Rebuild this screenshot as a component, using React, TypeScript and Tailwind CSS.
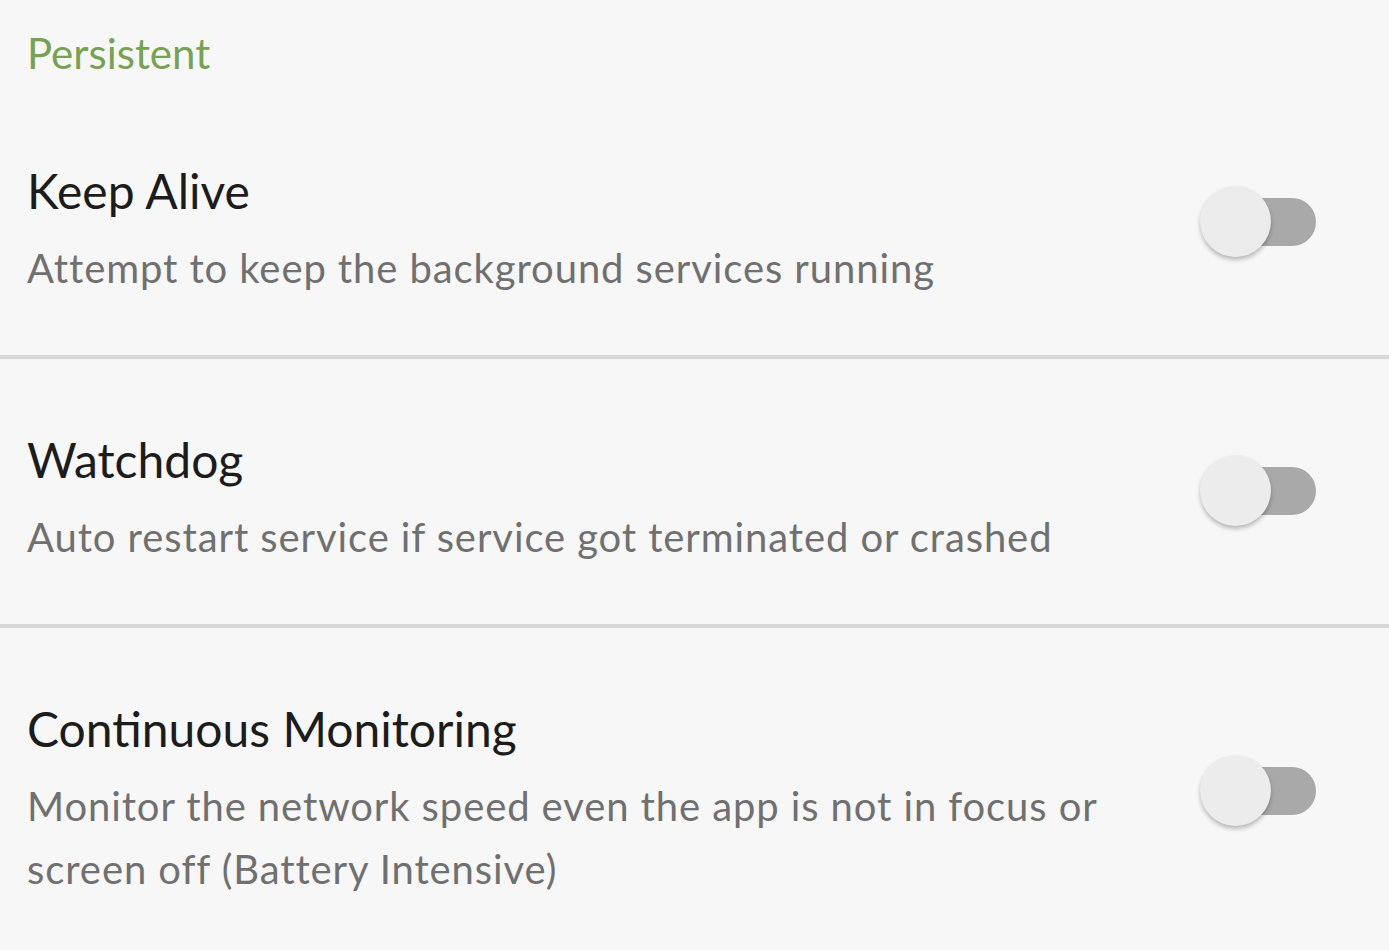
import React from "react";

function Toggle() {
  return (
    <div className="relative w-[116px] h-[72px] shrink-0 mb-[18px]">
      <div className="absolute right-0 top-[12px] w-[80px] h-[48px] rounded-full bg-[#a9a9a9]" />
      <div className="absolute left-0 top-0 w-[71px] h-[71px] rounded-full bg-[#ececec] shadow-[0_3px_4px_rgba(0,0,0,0.25)]" />
    </div>
  );
}

function Row({ title, desc, last }: { title: string; desc: React.ReactNode; last?: boolean }) {
  return (
    <div className={"flex items-center pl-[27px] pr-[73px] pt-[71px] pb-[55px] " + (last ? "" : "border-b-4 border-[#d9d9d9]")}>
      <div className="flex-1 min-w-0">
        <div className="text-[48px] leading-[60px] text-[#1c1c1c] mb-[16px]">{title}</div>
        <div className="text-[40px] leading-[63px] tracking-[0.9px] text-[#707070]">{desc}</div>
      </div>
      <Toggle />
    </div>
  );
}

export default function App() {
  return (
    <div className="w-[1389px] h-[950px] overflow-hidden bg-[#f7f7f7]" style={{ fontFamily: "Lato, 'Open Sans', sans-serif" }}>
      <div className="pl-[27px] pt-[26px] h-[90px] text-[42px] leading-[54px] text-[#77a253]">Persistent</div>
      <Row title="Keep Alive" desc="Attempt to keep the background services running" />
      <Row title="Watchdog" desc="Auto restart service if service got terminated or crashed" />
      <Row
        title="Continuous Monitoring"
        desc={<>Monitor the network speed even the app is not in focus or<br />screen off (Battery Intensive)</>}
        last
      />
    </div>
  );
}
